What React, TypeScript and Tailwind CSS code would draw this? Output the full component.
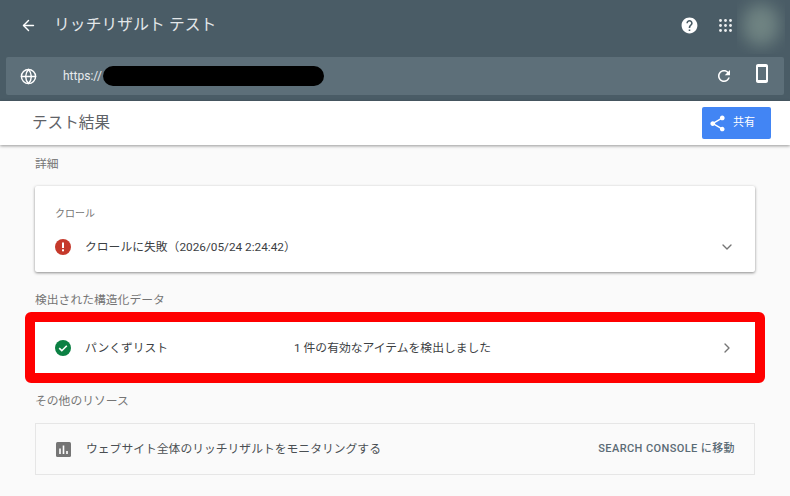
import { ArrowLeft, ChevronDown, ChevronRight, Globe } from 'lucide-react'

const font = "font-['Roboto','Noto_Sans_CJK_JP',sans-serif]"

function HelpIcon() {
  return (
    <svg viewBox="0 0 24 24" className="h-[19px] w-[19px] fill-white">
      <path d="M12 2C6.48 2 2 6.48 2 12s4.48 10 10 10 10-4.48 10-10S17.52 2 12 2zm1 17h-2v-2h2v2zm2.07-7.75l-.9.92C13.45 12.9 13 13.5 13 15h-2v-.5c0-1.1.45-2.1 1.17-2.83l1.24-1.26c.37-.36.59-.86.59-1.41 0-1.1-.9-2-2-2s-2 .9-2 2H8c0-2.21 1.79-4 4-4s4 1.79 4 4c0 .88-.36 1.68-.93 2.25z" />
    </svg>
  )
}

function AppsIcon() {
  return (
    <svg viewBox="0 0 13 13" className="h-[13px] w-[13px] fill-white opacity-90">
      {[1.5, 6.5, 11.5].map((y) =>
        [1.5, 6.5, 11.5].map((x) => <circle key={`${x}-${y}`} cx={x} cy={y} r="1.4" />)
      )}
    </svg>
  )
}

function RefreshIcon() {
  return (
    <svg viewBox="0 0 24 24" className="h-[18px] w-[18px] fill-white">
      <path d="M17.65 6.35C16.2 4.9 14.21 4 12 4c-4.42 0-7.99 3.58-7.99 8s3.57 8 7.99 8c3.73 0 6.84-2.55 7.73-6h-2.08c-.82 2.33-3.04 4-5.65 4-3.31 0-6-2.69-6-6s2.69-6 6-6c1.66 0 3.14.69 4.22 1.78L13 11h7V4l-2.35 2.35z" />
    </svg>
  )
}

function PhoneIcon() {
  return (
    <svg viewBox="0 0 12 19" className="h-[19px] w-[12px] fill-white">
      <path d="M2 0h8c1.1 0 2 .9 2 2v15c0 1.1-.9 2-2 2H2c-1.1 0-2-.9-2-2V2C0 .9.9 0 2 0zm0 3v13h8V3H2z" />
    </svg>
  )
}

function ShareIcon() {
  return (
    <svg viewBox="0 0 24 24" className="h-[19px] w-[19px] fill-white">
      <path d="M18 16.08c-.76 0-1.44.3-1.96.77L8.91 12.7c.05-.23.09-.46.09-.7s-.04-.47-.09-.7l7.05-4.11c.54.5 1.25.81 2.04.81 1.66 0 3-1.34 3-3s-1.34-3-3-3-3 1.34-3 3c0 .24.04.47.09.7L8.04 9.81C7.5 9.31 6.79 9 6 9c-1.66 0-3 1.34-3 3s1.34 3 3 3c.79 0 1.5-.31 2.04-.81l7.12 4.16c-.05.21-.08.43-.08.65 0 1.61 1.31 2.92 2.92 2.92s2.92-1.31 2.92-2.92-1.31-2.92-2.92-2.92z" />
    </svg>
  )
}

function ErrorIcon() {
  return (
    <svg viewBox="0 0 16 16" className="h-[16px] w-[16px]">
      <circle cx="8" cy="8" r="8" fill="#c5392b" />
      <rect x="7" y="3.5" width="2" height="5.5" fill="#fff" />
      <rect x="7" y="10.3" width="2" height="2" fill="#fff" />
    </svg>
  )
}

function CheckIcon() {
  return (
    <svg viewBox="0 0 16 16" className="h-[16px] w-[16px]">
      <circle cx="8" cy="8" r="8" fill="#0b8043" />
      <path d="M4.2 8.2l2.6 2.5 5-5" fill="none" stroke="#fff" strokeWidth="1.6" />
    </svg>
  )
}

function ChartIcon() {
  return (
    <svg viewBox="0 0 15 15" className="h-[15px] w-[15px]">
      <rect width="15" height="15" rx="1.5" fill="#757575" />
      <rect x="3.2" y="6.5" width="1.6" height="5.5" fill="#fff" />
      <rect x="6.7" y="3.5" width="1.6" height="8.5" fill="#fff" />
      <rect x="10.2" y="9" width="1.6" height="3" fill="#fff" />
    </svg>
  )
}

function SectionLabel({ children, className }: { children: string; className: string }) {
  return <div className={`h-[18px] text-[11.8px] leading-[18px] text-[#757575] ${className}`}>{children}</div>
}

export default function App() {
  return (
    <div className={`relative flex h-[496px] w-[790px] flex-col overflow-hidden bg-[#fafafa] ${font}`}>
      {/* Header */}
      <header className="relative h-[101px] shrink-0 overflow-hidden bg-[#4a5c66]">
        <div className="flex h-[50px] items-center pl-[20px] pr-[58px]">
          <ArrowLeft className="h-[17px] w-[17px] text-white" strokeWidth={2} />
          <span className="ml-[17px] flex-1 text-[15.7px] tracking-[0.15px] text-[#e3e7e9]">リッチリザルト テスト</span>
          <HelpIcon />
          <div className="ml-[20px]">
            <AppsIcon />
          </div>
        </div>
        {/* blurred avatar */}
        <div className="absolute right-[5px] top-0 h-[54px] w-[48px] overflow-hidden">
          <div className="absolute left-[6px] top-[4px] h-[42px] w-[36px] rounded-full bg-[#6f8382] blur-[8px]" />
        </div>
        <div className="mx-[6px] mt-[7px] flex h-[38px] items-center rounded-[2px] bg-[#5d6f79] pl-[14px] pr-[16px]">
          <Globe className="h-[17px] w-[17px] text-white" strokeWidth={2} />
          <span className="ml-[26px] text-[12px] text-[#e8ebed]">https://</span>
          <div className="ml-[1px] h-[20px] w-[221px] rounded-full bg-black" />
          <div className="flex-1" />
          <RefreshIcon />
          <div className="mb-[5px] ml-[23px]">
            <PhoneIcon />
          </div>
        </div>
      </header>

      {/* Result bar */}
      <div className="relative z-10 flex h-[44px] shrink-0 items-center bg-white pl-[32px] pr-[19px] shadow-[0_1px_3px_rgba(0,0,0,0.4)]">
        <span className="flex-1 pt-[1px] text-[15.6px] text-[#5f6368]">テスト結果</span>
        <button className="flex h-[32px] w-[69px] items-center rounded-[2px] bg-[#4285f4] pl-[6px] text-[11px] text-white">
          <ShareIcon />
          <span className="ml-[6px]">共有</span>
        </button>
      </div>

      {/* Content */}
      <main className="flex flex-col px-[35px]">
        <SectionLabel className="mt-[10px]">詳細</SectionLabel>
        <section className="mt-[13px] h-[86px] rounded-[2px] bg-white pl-[20px] pr-[20px] pt-[21px] shadow-[0_1px_3px_rgba(0,0,0,0.45)]">
          <div className="h-[14px] text-[10px] leading-[14px] text-[#757575]">クロール</div>
          <div className="mt-[16px] flex items-center">
            <ErrorIcon />
            <span className="ml-[14px] flex-1 pt-[2px] text-[11.8px] text-[#3c4043]">クロールに失敗（2026/05/24 2:24:42）</span>
            <ChevronDown className="h-[16px] w-[16px] text-[#757575]" strokeWidth={2} />
          </div>
        </section>
        <SectionLabel className="mt-[19px]">検出された構造化データ</SectionLabel>

        {/* Highlighted row */}
        <section className="-mx-[10px] mt-[3px] flex h-[71px] items-center rounded-[6px] border-[10px] border-[#ff0000] bg-white pl-[20px] pr-[20px]">
          <CheckIcon />
          <span className="ml-[14px] w-[209px] pt-[2px] text-[11.8px] text-[#3c4043]">パンくずリスト</span>
          <span className="flex-1 pt-[2px] text-[11.8px] text-[#3c4043]">1 件の有効なアイテムを検出しました</span>
          <ChevronRight className="h-[16px] w-[16px] text-[#757575]" strokeWidth={2} />
        </section>

        <SectionLabel className="mt-[9px]">その他のリソース</SectionLabel>
        <section className="mt-[13px] flex h-[52px] items-center border border-[#e6e6e6] pl-[20px] pr-[19px]">
          <ChartIcon />
          <span className="ml-[15px] flex-1 pt-[1px] text-[11.8px] text-[#4a4f53]">ウェブサイト全体のリッチリザルトをモニタリングする</span>
          <span className="pt-[1px] text-[11px] font-medium tracking-[0.4px] text-[#5a6b75]">SEARCH CONSOLE に移動</span>
        </section>
      </main>
    </div>
  )
}
